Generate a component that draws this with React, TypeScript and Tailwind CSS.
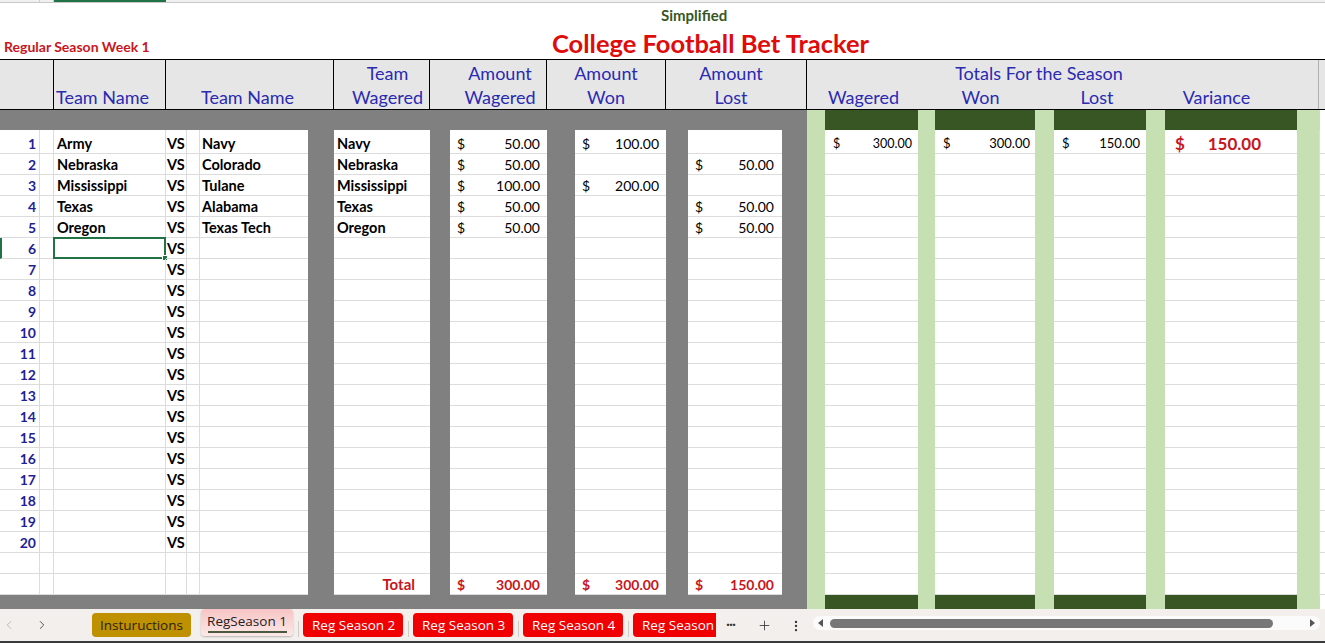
import React from 'react'
import { ChevronLeft, ChevronRight, Plus, MoreVertical } from 'lucide-react'

const grid =
  'grid grid-cols-[40px_14px_112px_21px_13px_108px_26px_96px_20px_97px_28px_91px_22px_94px_25px_18px_93px_17px_100px_19px_92px_19px_132px_22px_6px]'

const GRAY = 'bg-[#808080]'
const LITE = 'bg-[#c6e0b4]'
const DARK = 'bg-[#375623]'

const grayCols = [6, 8, 10, 12, 14]
const liteCols = [15, 17, 19, 21, 23]

type Game = { a: string; b: string; pick: string; wager: string; won?: string; lost?: string }

const games: Game[] = [
  { a: 'Army', b: 'Navy', pick: 'Navy', wager: '50.00', won: '100.00' },
  { a: 'Nebraska', b: 'Colorado', pick: 'Nebraska', wager: '50.00', lost: '50.00' },
  { a: 'Mississippi', b: 'Tulane', pick: 'Mississippi', wager: '100.00', won: '200.00' },
  { a: 'Texas', b: 'Alabama', pick: 'Texas', wager: '50.00', lost: '50.00' },
  { a: 'Oregon', b: 'Texas Tech', pick: 'Oregon', wager: '50.00', lost: '50.00' },
]

const tabs = ['Reg Season 2', 'Reg Season 3', 'Reg Season 4']

const Money = ({ v, className }: { v: string; className: string }) => (
  <div className={`flex w-full justify-between ${className}`}>
    <span>$</span>
    <span>{v}</span>
  </div>
)

const Band = ({ h }: { h: string }) => (
  <div className={`${grid} ${h}`}>
    {Array.from({ length: 25 }).map((_, i) => {
      let c = GRAY
      if (i >= 15) c = i % 2 === 1 ? LITE : DARK
      if (i === 24) c = 'bg-white border-l border-[#d4d4d4]'
      return <div key={i} className={c} />
    })}
  </div>
)

const Row = ({
  h,
  cells,
  selected,
}: {
  h: string
  cells: Record<number, React.ReactNode>
  selected?: boolean
}) => (
  <div className={`${grid} grid-rows-1 overflow-visible leading-[17px] ${h}`}>
    {Array.from({ length: 25 }).map((_, i) => {
      if (grayCols.includes(i)) return <div key={i} className={GRAY} />
      if (liteCols.includes(i)) return <div key={i} className={LITE} />
      const edge = i <= 4 ? 'border-r' : i === 24 ? 'border-l' : ''
      return (
        <div
          key={i}
          className={`relative flex min-h-0 items-end border-b border-[#dcdcdc] pb-[1px] ${edge} ${
            selected && i === 0 ? 'border-l-2 border-l-[#217346]' : ''
          }`}
        >
          {cells[i]}
          {selected && i === 2 && (
            <>
              <div className="absolute -top-[1px] -left-[1px] -right-[1px] -bottom-[1px] border-2 border-[#217346]" />
              <div className="absolute -bottom-[3px] -right-[3px] h-[6px] w-[6px] border border-white bg-[#217346]" />
            </>
          )}
        </div>
      )
    })}
  </div>
)

const HeadCell = ({ span, top, bottom, className }: { span: string; top?: string; bottom?: string; className: string }) => (
  <div className={`${span} flex flex-col border-r border-black pt-[1px] ${className}`}>
    <div className="h-[24px] leading-[24px]">{top || '\u00a0'}</div>
    <div className="h-[24px] leading-[24px]">{bottom || '\u00a0'}</div>
  </div>
)

export default function App() {
  const rows: React.ReactNode[] = []

  for (let n = 1; n <= 20; n++) {
    const g = games[n - 1]
    const cells: Record<number, React.ReactNode> = {
      0: <span className="w-full pr-[3px] text-right font-bold text-[#1f1f96]">{n}</span>,
      3: <span className="pl-[1px] text-[14.5px] font-bold">VS</span>,
    }
    if (g) {
      cells[2] = <span className="pl-[3px] text-[14.5px] font-bold">{g.a}</span>
      cells[5] = <span className="pl-[2px] text-[14.5px] font-bold">{g.b}</span>
      cells[7] = <span className="pl-[3px] text-[14.5px] font-bold">{g.pick}</span>
      cells[9] = <Money v={g.wager} className="px-[7px]" />
      if (g.won) cells[11] = <Money v={g.won} className="px-[7px]" />
      if (g.lost) cells[13] = <Money v={g.lost} className="pl-[7px] pr-[8px]" />
    }
    if (n === 1) {
      cells[16] = <Money v="300.00" className="pl-[8px] pr-[6px] text-[12.5px]" />
      cells[18] = <Money v="300.00" className="pl-[8px] pr-[5px] text-[13px]" />
      cells[20] = <Money v="150.00" className="pl-[8px] pr-[6px] text-[13px]" />
      cells[22] = <Money v="150.00" className="pl-[10px] pr-[36px] text-[17px] font-bold text-[#c8161d]" />
    }
    rows.push(<Row key={n} h={n === 1 ? 'h-[24px]' : 'h-[21px]'} cells={cells} selected={n === 6} />)
  }

  return (
    <div className="h-[643px] w-[1325px] overflow-hidden bg-white font-['Lato'] text-[14px] text-black">
      {/* column header remnant */}
      <div className={`${grid} h-[3px] border-b border-[#c8c8c8] bg-[#f0f0f0]`}>
        <div className="border-r border-[#d0d0d0]" />
        <div className="border-r border-[#d0d0d0]" />
        <div className="bg-[#217346]" />
      </div>

      {/* titles */}
      <div className="h-[56px]">
        <div className="h-[22px] pl-[661px] pt-[2px] text-[15px] font-bold leading-[20px] text-[#375623]">Simplified</div>
        <div className="flex h-[34px]">
          <div className="w-[552px] pl-[4px] pt-[13px] text-[14px] font-bold leading-[18px] text-[#c8161d]">
            Regular Season Week 1
          </div>
          <div className="pt-[3px] text-[25.5px] font-bold leading-[30px] text-[#e00b0b]">College Football Bet Tracker</div>
        </div>
      </div>

      {/* header */}
      <div className={`${grid} h-[51px] border-y border-black bg-[#e7e6e6] text-[18px] text-[#2a2ab2]`}>
        <HeadCell span="col-span-2" className="" />
        <HeadCell span="col-span-1" bottom="Team Name" className="items-center pr-[14px]" />
        <HeadCell span="col-span-4" bottom="Team Name" className="items-center pr-[4px]" />
        <HeadCell span="col-span-1" top="Team" bottom="Wagered" className="items-center pl-[12px]" />
        <HeadCell span="col-span-2" top="Amount" bottom="Wagered" className="items-center pl-[24px]" />
        <HeadCell span="col-span-2" top="Amount" bottom="Won" className="items-center" />
        <HeadCell span="col-span-3" top="Amount" bottom="Lost" className="items-center pr-[10px]" />
        <div className="col-span-9 flex flex-col border-r border-[#b0b0b0] pt-[1px]">
          <div className="h-[24px] pr-[47px] text-center leading-[24px]">Totals For the Season</div>
          <div className="grid h-[24px] grid-cols-[18px_93px_17px_100px_19px_92px_19px_132px_22px] leading-[24px]">
            <div />
            <div className="pr-[16px] text-center">Wagered</div>
            <div />
            <div className="pr-[9px] text-center">Won</div>
            <div />
            <div className="pr-[6px] text-center">Lost</div>
            <div />
            <div className="pr-[29px] text-center">Variance</div>
            <div />
          </div>
        </div>
        <div />
      </div>

      <Band h="h-[20px]" />

      {rows}
      <Row h="h-[21px]" cells={{}} />
      <Row
        h="h-[21px]"
        cells={{
          7: <span className="w-full pr-[15px] text-right text-[15px] font-bold text-[#c8161d]">Total</span>,
          9: <Money v="300.00" className="px-[7px] font-bold text-[#c8161d]" />,
          11: <Money v="300.00" className="px-[7px] font-bold text-[#c8161d]" />,
          13: <Money v="150.00" className="pl-[7px] pr-[8px] font-bold text-[#c8161d]" />,
        }}
      />

      <Band h="h-[14px]" />

      {/* sheet tabs */}
      <div className="flex h-[34px] border-b-2 border-[#3a3a3a] bg-[#f3efed] font-['Open_Sans'] text-[13.5px]">
        <div className="flex w-[92px] items-center">
          <ChevronLeft size={14} strokeWidth={1.5} className="ml-[2px] text-[#b4b4b4]" />
          <ChevronRight size={14} strokeWidth={1.5} className="ml-[19px] text-[#404040]" />
        </div>
        <div className="mt-[4px] h-[24px] w-[99px] rounded-[4px] bg-[#bf9000] text-center leading-[24px] text-[#2b2410]">
          Instuructions
        </div>
        <div className="relative ml-[10px] h-[27px] w-[92px] rounded-[4px] bg-gradient-to-b from-[#f7c4c4] to-[#fde8e8] text-center leading-[25px] text-[#222] shadow-[0_1px_2px_rgba(0,0,0,0.25)]">
          RegSeason 1
          <div className="absolute bottom-[3px] left-[7px] right-[6px] h-[2px] bg-[#4a5a3c]" />
        </div>
        {tabs.map(t => (
          <div key={t} className="flex">
            <div className="ml-[5px] mt-[12px] h-[16px] w-px bg-[#cfcac8]" />
            <div className="ml-[4px] mt-[4px] h-[24px] w-[100px] rounded-[4px] bg-[#f00000] pl-[9px] leading-[24px] text-white">
              {t}
            </div>
          </div>
        ))}
        <div className="ml-[5px] mt-[12px] h-[16px] w-px bg-[#cfcac8]" />
        <div className="ml-[4px] mt-[4px] h-[24px] w-[83px] whitespace-nowrap rounded-l-[4px] bg-[#f00000] pl-[9px] leading-[24px] text-white">
          Reg Season
        </div>
        <div className="ml-[10px] flex h-[32px] items-center text-[14px] font-bold leading-none tracking-[-1px] text-[#333]">
          ···
        </div>
        <Plus size={15} strokeWidth={1.3} className="ml-[22px] mt-[9px] text-[#333]" />
        <MoreVertical size={14} strokeWidth={2} className="ml-[17px] mt-[10px] text-[#333]" />
        <div className="ml-[10px] mt-[7px] flex h-[14px] w-[507px] items-center rounded-full bg-[#fbfbfb]">
          <svg width="6" height="8" viewBox="0 0 6 8" className="ml-[5px]">
            <path d="M5 0 L0 4 L5 8 Z" fill="#555" />
          </svg>
          <div className="ml-[6px] h-[9px] w-[443px] rounded-full bg-[#777]" />
          <svg width="6" height="8" viewBox="0 0 6 8" className="ml-[36px]">
            <path d="M1 0 L6 4 L1 8 Z" fill="#555" />
          </svg>
        </div>
      </div>
    </div>
  )
}
